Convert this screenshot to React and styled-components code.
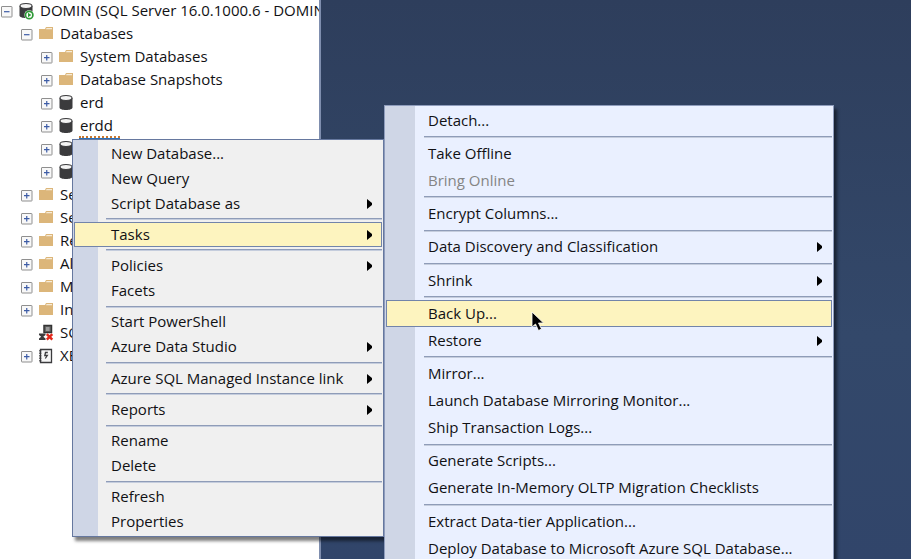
import React from "react";
import styled, { createGlobalStyle, css } from "styled-components";

const GlobalStyle = createGlobalStyle`
  *, *::before, *::after { box-sizing: border-box; }
  body {
    margin: 0;
    overflow: hidden;
    font-family: "Open Sans", "Noto Sans", sans-serif;
    font-size: 15px;
    color: #111114;
  }
  button { font: inherit; color: inherit; }
`;

const Desktop = styled.div`
  position: relative;
  display: flex;
  height: 100vh;
  overflow: hidden;
  background: linear-gradient(180deg, #2e3e5c 0%, #33486a 60%, #31456a 100%);
`;

const Explorer = styled.aside`
  flex: 0 0 321px;
  overflow: hidden;
  background: #ffffff;
  border-right: 2px solid #7f8eae;
`;

const Tree = styled.ul`
  list-style: none;
  margin: 0;
  padding: 0;
`;

const TreeRow = styled.li`
  display: flex;
  align-items: center;
  height: 23px;
  padding-left: ${({ $level }) => $level * 20}px;
  white-space: nowrap;
`;

const Toggle = styled.button`
  display: flex;
  flex: none;
  width: 13px;
  height: 13px;
  padding: 0;
  border: 0;
  background: none;
`;

const ToggleSpace = styled.span`
  flex: none;
  width: 13px;
`;

const IconSlot = styled.span`
  display: flex;
  flex: none;
  width: 18px;
  height: 20px;
  margin: 0 4px;
`;

const Label = styled.span`
  height: 23px;
  padding: 0 1px;
  line-height: 21px;
  ${({ $focused }) =>
    $focused &&
    css`
      padding-right: 7px;
      border-bottom: 2px dotted #c9782f;
      box-shadow: 0 1px 0 #2a6fb8;
    `}
`;

const Menu = styled.div`
  position: absolute;
  display: flex;
  flex-direction: column;
  border: 1px solid #66789f;
  box-shadow: 3px 4px 3px rgba(0, 0, 0, 0.5);
`;

const ContextMenu = styled(Menu)`
  top: 139px;
  left: 72px;
  width: 312px;
  min-height: 398px;
  padding: 1px 0;
  background: linear-gradient(90deg, #cfd6e6 25px, #f0f0f0 25px);
`;

const TaskMenu = styled(Menu)`
  top: 105px;
  left: 384px;
  width: 450px;
  min-height: 458px;
  padding-top: 1px;
  border-color: #8e9cbc;
  background: linear-gradient(90deg, #cfd6e6 30px, #eaf0ff 30px);
`;

const MenuItem = styled.button`
  display: flex;
  flex: none;
  align-items: center;
  justify-content: space-between;
  height: ${({ $tall }) => ($tall ? 27 : 25)}px;
  margin: 0 1px;
  padding: 0 9px 0 ${({ $tall }) => ($tall ? 42 : 37)}px;
  border: 0;
  background: none;
  text-align: left;
  white-space: nowrap;
  ${({ $active }) =>
    $active &&
    css`
      background: #fdf4bf;
      box-shadow: inset 0 0 0 1px #7284aa;
    `}
  &:disabled { color: #858585; }
`;

const ItemText = styled.span`
  padding-bottom: 2px;
`;

const Separator = styled.hr`
  flex: none;
  height: 2px;
  margin: auto 1px auto ${({ $tall }) => ($tall ? 39 : 33)}px;
  border: 0;
  border-top: 1px solid #8f9cb8;
  background: #c5cddd;
`;

const Pointer = styled.svg`
  position: absolute;
  top: 310px;
  left: 531px;
`;

function ExpandToggle({ open, name }) {
  return (
    <Toggle type="button" aria-label={(open ? "Collapse " : "Expand ") + name}>
      <svg width="13" height="13" viewBox="0 0 13 13">
        <rect x="1.5" y="1.5" width="10.5" height="10.5" rx="0.5" fill="#f8f8f8" stroke="#8f8f8f" />
        <path d={open ? "M4 6.7h5.5" : "M4 6.7h5.5M6.75 4v5.5"} stroke="#3d5ca6" strokeWidth="1.2" />
      </svg>
    </Toggle>
  );
}

const Folder = () => (
  <svg width="18" height="18" viewBox="0 0 18 18">
    <path d="M2 4h6l1-2h7v12H2z" fill="#dcb67a" />
    <path d="M9.5 3h5.5v1.2H9z" fill="#f7ecd8" />
  </svg>
);

const Cylinder = () => (
  <>
    <path d="M2.5 4v9.5c0 1.6 2.8 2.5 6.5 2.5s6.5-.9 6.5-2.5V4z" fill="#3b3b3d" />
    <ellipse cx="9" cy="4" rx="6" ry="2.5" fill="#f4f4f4" stroke="#3b3b3d" strokeWidth="1.1" />
  </>
);

const Database = () => (
  <svg width="18" height="18" viewBox="0 0 18 18">
    <Cylinder />
  </svg>
);

const Server = () => (
  <svg width="18" height="18" viewBox="0 0 18 18">
    <Cylinder />
    <circle cx="12.2" cy="13" r="4.8" fill="#fff" />
    <circle cx="12.2" cy="13" r="3.7" fill="#fff" stroke="#2f9a37" strokeWidth="1.7" />
    <path d="M11 10.8v4.4l3.4-2.2z" fill="#2f9a37" />
  </svg>
);

const Agent = () => (
  <svg width="18" height="18" viewBox="0 0 18 18">
    <path d="M7 1.5h7.5v7H7z" fill="#666" stroke="#333" strokeWidth="1.5" />
    <path d="M9 4h3.5M9 6h3.5" stroke="#ccc" />
    <path d="M2 9.5h6.5v1.5L6.3 12.7l2.2 1.8V16H2v-1.5l2.2-1.8L2 11z" fill="#3b3b3d" />
    <path d="M9.8 10.2l5.5 5.5M15.3 10.2l-5.5 5.5" stroke="#e3271b" strokeWidth="2.4" />
  </svg>
);

const Profiler = () => (
  <svg width="18" height="18" viewBox="0 0 18 18">
    <path d="M3.5 2.5h11v13h-11z" fill="#f7f7f7" stroke="#3b3b3d" strokeWidth="1.3" />
    <path d="M3.3 3v12" stroke="#3b3b3d" strokeWidth="2" strokeDasharray="1.5 1" />
    <path d="M10.8 5.5H8.5L7.8 8.5h2.5L8.3 11.5" fill="none" stroke="#3b3b3d" strokeWidth="1.3" />
  </svg>
);

const Arrow = () => (
  <svg width="6" height="10" viewBox="0 0 6 10" aria-hidden="true">
    <path d="M0 0v10L5 6V4z" fill="#000" />
  </svg>
);

const treeRows = [
  { level: 0, open: true, icon: Server, label: "DOMIN (SQL Server 16.0.1000.6 - DOMIN\\admin)" },
  { level: 1, open: true, icon: Folder, label: "Databases" },
  { level: 2, icon: Folder, label: "System Databases" },
  { level: 2, icon: Folder, label: "Database Snapshots" },
  { level: 2, icon: Database, label: "erd" },
  { level: 2, icon: Database, label: "erdd", focused: true },
  { level: 2, icon: Database, label: "" },
  { level: 2, icon: Database, label: "" },
  { level: 1, icon: Folder, label: "Security" },
  { level: 1, icon: Folder, label: "Server Objects" },
  { level: 1, icon: Folder, label: "Replication" },
  { level: 1, icon: Folder, label: "Always On High Availability" },
  { level: 1, icon: Folder, label: "Management" },
  { level: 1, icon: Folder, label: "Integration Services Catalogs" },
  { level: 1, leaf: true, icon: Agent, label: "SQL Server Agent" },
  { level: 1, icon: Profiler, label: "XEvent Profiler" },
];

const contextGroups = [
  [{ label: "New Database..." }, { label: "New Query" }, { label: "Script Database as", sub: true }],
  [{ label: "Tasks", sub: true, active: true }],
  [{ label: "Policies", sub: true }, { label: "Facets" }],
  [{ label: "Start PowerShell" }, { label: "Azure Data Studio", sub: true }],
  [{ label: "Azure SQL Managed Instance link", sub: true }],
  [{ label: "Reports", sub: true }],
  [{ label: "Rename" }, { label: "Delete" }],
  [{ label: "Refresh" }, { label: "Properties" }],
];

const taskGroups = [
  [{ label: "Detach..." }],
  [{ label: "Take Offline" }, { label: "Bring Online", disabled: true }],
  [{ label: "Encrypt Columns..." }],
  [{ label: "Data Discovery and Classification", sub: true }],
  [{ label: "Shrink", sub: true }],
  [{ label: "Back Up...", active: true }, { label: "Restore", sub: true }],
  [{ label: "Mirror..." }, { label: "Launch Database Mirroring Monitor..." }, { label: "Ship Transaction Logs..." }],
  [{ label: "Generate Scripts..." }, { label: "Generate In-Memory OLTP Migration Checklists" }],
  [{ label: "Extract Data-tier Application..." }, { label: "Deploy Database to Microsoft Azure SQL Database..." }],
];

function MenuGroups({ groups, tall }) {
  return groups.map((group, index) => (
    <React.Fragment key={group[0].label}>
      {index > 0 && <Separator $tall={tall} />}
      {group.map((item) => (
        <MenuItem
          key={item.label}
          type="button"
          role="menuitem"
          aria-haspopup={item.sub ? "menu" : undefined}
          disabled={item.disabled}
          $tall={tall}
          $active={item.active}
        >
          <ItemText>{item.label}</ItemText>
          {item.sub && <Arrow />}
        </MenuItem>
      ))}
    </React.Fragment>
  ));
}

export default function App() {
  return (
    <Desktop>
      <GlobalStyle />
      <Explorer>
        <Tree>
          {treeRows.map(({ icon: Icon, ...row }, index) => (
            <TreeRow key={index} $level={row.level}>
              {row.leaf ? <ToggleSpace /> : <ExpandToggle open={row.open} name={row.label || "database"} />}
              <IconSlot>
                <Icon />
              </IconSlot>
              <Label $focused={row.focused}>{row.label}</Label>
            </TreeRow>
          ))}
        </Tree>
      </Explorer>
      <ContextMenu role="menu" aria-label="Database">
        <MenuGroups groups={contextGroups} />
      </ContextMenu>
      <TaskMenu role="menu" aria-label="Tasks">
        <MenuGroups groups={taskGroups} tall />
      </TaskMenu>
      <Pointer width="15" height="23" viewBox="0 0 15 23" aria-hidden="true">
        <path d="M1 2v15l3.5-3 3 6.5 3-1.5-3-6h5z" fill="#000" stroke="#fff" strokeWidth="0.8" />
      </Pointer>
    </Desktop>
  );
}
